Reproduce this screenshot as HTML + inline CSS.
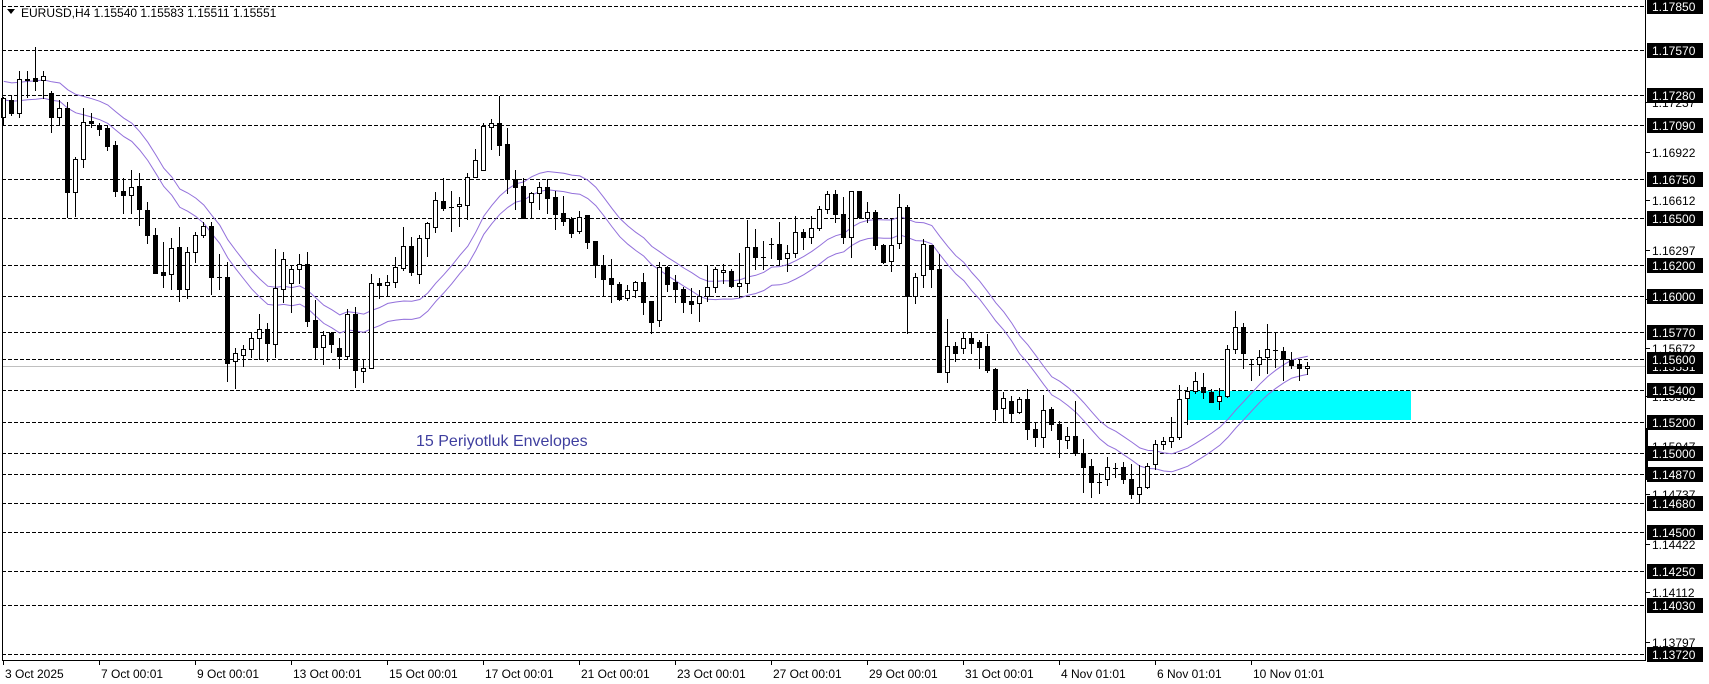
<!DOCTYPE html>
<html><head><meta charset="utf-8">
<style>
html,body{margin:0;padding:0;background:#fff;width:1709px;height:684px;overflow:hidden}
svg{display:block}
text{font-family:"Liberation Sans",Arial,sans-serif;font-size:12px}
</style></head>
<body>
<svg id="s" width="1709" height="684" viewBox="0 0 1709 684" xmlns="http://www.w3.org/2000/svg">
<rect width="1709" height="684" fill="#fff"/>
<g id="grid"></g>
<rect x="1188" y="391" width="223" height="29" fill="#00ffff"/>
<line x1="2" y1="366.5" x2="1645" y2="366.5" stroke="#c0c0c0" stroke-width="1"/>
<g id="env"></g>
<g id="candles"></g>
<text x="416" y="446" fill="#3f3f9f" style="font-size:16px">15 Periyotluk Envelopes</text>
<polygon points="7,9 15,9 11,14" fill="#000"/>
<text x="21" y="17" fill="#000">EURUSD,H4  1.15540 1.15583 1.15511 1.15551</text>
<line x1="2.5" y1="0" x2="2.5" y2="661" stroke="#000"/>
<line x1="1645.5" y1="0" x2="1645.5" y2="661" stroke="#000"/>
<line x1="2" y1="660.5" x2="1646" y2="660.5" stroke="#000"/>
<rect x="1645" y="428" width="3" height="52" fill="#000"/>
<g id="axis"></g>
<g id="time"></g>
</svg>
<script>
var NS="http://www.w3.org/2000/svg";
function el(p,t,a,txt){var e=document.createElementNS(NS,t);for(var k in a)e.setAttribute(k,a[k]);if(txt!==undefined)e.textContent=txt;p.appendChild(e);return e;}
function Y(p){return 6+(1.1785-p)*15690;}
var grid=document.getElementById('grid'),axis=document.getElementById('axis');
var boxes=[1.1785,1.1757,1.1728,1.1709,1.1675,1.165,1.162,1.16,1.1577,1.156,1.154,1.152,1.15,1.1487,1.1468,1.145,1.1425,1.1403,1.1372];
boxes.forEach(function(p){var y=Math.round(Y(p))+0.5;el(grid,'line',{x1:2,y1:y,x2:1645,y2:y,stroke:'#000','stroke-dasharray':'4,2','stroke-width':1});});
var ticks=["1.17237","1.16922","1.16612","1.16297","1.15982","1.15672","1.15362","1.15047","1.14737","1.14422","1.14112","1.13797"];
ticks.forEach(function(t){var y=Math.round(Y(parseFloat(t)));el(axis,'line',{x1:1645,y1:y+0.5,x2:1650,y2:y+0.5,stroke:'#000'});el(axis,'text',{x:1652,y:y+5,fill:'#000'},t);});
// current price
(function(){var y=366;el(axis,'rect',{x:1647,y:y-7,width:56,height:15,fill:'#000'});el(axis,'text',{x:1652,y:y+5,fill:'#fff'},'1.15551');})();
boxes.forEach(function(p){var y=Math.round(Y(p));el(axis,'rect',{x:1647,y:y-7,width:56,height:15,fill:'#000'});el(axis,'text',{x:1652,y:y+5,fill:'#fff'},p.toFixed(5));});
// time axis
var tg=document.getElementById('time');
var tl=["3 Oct 2025","7 Oct 00:01","9 Oct 00:01","13 Oct 00:01","15 Oct 00:01","17 Oct 00:01","21 Oct 00:01","23 Oct 00:01","27 Oct 00:01","29 Oct 00:01","31 Oct 00:01","4 Nov 01:01","6 Nov 01:01","10 Nov 01:01"];
tl.forEach(function(t,i){var x=i==0?3:Math.round(3.3+96*i);el(tg,'line',{x1:x+0.5,y1:660,x2:x+0.5,y2:665,stroke:'#000'});el(tg,'text',{x:x+2,y:678,fill:'#000'},t);});
// candles
var Z6=[['w',295,352,290,375],['b',300,340,285,345],['w',238,340,213,352],['w',236,240,213,290],['b',235,244,142,270],['w',228,240,212,295],['b',280,352,272,395],['w',325,352,300,375],['b',325,575,305,650],['w',478,575,470,647],['w',367,478,325,500],['b',363,368,340,382],['b',375,386,370,404],['b',385,437,378,450],['b',435,572,422,587],['b',573,586,535,640],['w',560,586,510,638],['b',558,626,520,675],['b',630,706,605,728],['b',705,818,685,818],['b',817,824,726,860],['w',745,823,715,868],['b',742,868,682,902],['w',757,868,742,895],['w',705,757,697,785],['w',678,705,665,710],['b',678,832,665,882],['w',831,831,763,868],['b',831,1088,785,1142],['w',1060,1083,1045,1165],['w',1048,1066,1035,1097],['w',1015,1047,1000,1070],['w',988,1015,942,1077],['b',988,1030,968,1083],['w',865,1033,746,1072],['w',778,868,757,907],['w',808,848,796,937],['w',793,808,762,848],['b',793,962,755,978],['b',960,1040,900,1075],['w',1005,1042,992,1093],['b',1000,1033,997,1057],['b',1045,1067,1015,1105],['w',943,1067,928,1078],['b',943,1110,920,1162],['w',1105,1113,1080,1147],['w',850,1105,822,1105],['b',850,856,833,895],['w',845,856,825,888],['w',802,845,770,860],['w',737,805,680,810],['b',737,815,712,825]];
var Z7=[['w',505,612,495,640],['w',460,505,457,557],['w',390,472,366,485],['b',393,413,325,420],['w',410,410,363,482],['w',403,409,382,467],['w',320,404,310,448],['w',270,320,238,322],['w',168,300,160,300],['w',160,170,148,237],['b',160,224,78,254],['b',223,326,175,368],['b',326,350,300,418],['b',348,443,325,443],['w',370,395,365,443],['w',350,370,337,418],['b',350,383,326,430],['b',381,431,363,476],['b',428,452,378,465],['b',446,490,440,502],['w',440,482,422,488],['b',436,515,436,533],['b',514,586,512,622],['b',586,626,555,675],['b',625,643,567,695],['b',643,686,636,690],['w',661,685,645,690],['w',637,661,632,680],['b',637,695,610,733],['b',693,755,693,790],['w',592,751,577,767],['b',592,641,589,662],['b',637,658,615,695],['b',657,695,650,727],['b',693,703,654,728],['w',679,700,659,752],['w',652,679,585,692],['w',598,652,592,665],['w',600,607,582,640],['b',602,647,596,652],['w',640,649,549,680],['w',532,640,450,665],['b',532,560,478,598],['w',560,560,513,598],['w',522,522,505,565],['b',522,568,457,585],['w',550,565,525,602],['w',487,550,438,560],['b',487,502,478,537],['w',475,502,438,518],['w',418,473,407,480],['w',373,418,362,430],['b',373,433,360,455]];
var Z8=[['b',132,202,80,218],['w',62,202,62,262],['b',62,140,62,145],['w',125,145,97,155],['b',125,224,120,237],['b',226,275,222,280],['w',226,274,145,302],['w',112,220,72,235],['b',112,378,105,488],['w',320,378,310,398],['w',223,316,208,350],['b',226,298,226,352],['b',298,605,252,605],['w',527,607,448,635],['b',527,548,515,572],['w',505,535,488,550],['b',505,518,488,548],['b',517,532,510,594],['b',528,600,492,605],['b',598,718,593,750],['w',683,714,665,755],['b',693,730,678,755],['w',688,727,680,730],['b',688,778,658,808],['b',778,800,755,828],['w',720,800,676,830],['b',718,763,710,780],['b',763,808,753,862],['w',797,810,772,833],['b',797,850,693,855],['b',848,890,808,965],['b',888,935,868,982],['w',935,935,910,970],['w',892,927,860,945],['w',895,895,880,920],['b',892,928,875,940],['b',928,972,882,985],['w',950,972,885,998],['w',887,950,878,955],['w',823,882,810,898],['w',813,823,800,838],['w',800,813,742,830],['w',688,802,645,808],['w',663,685,652,762],['w',632,663,605,670],['b',652,667,608,685],['b',667,695,657,697],['w',677,693,655,718],['w',538,677,525,680],['w',472,538,423,548],['b',472,548,460,595]];
var Z9=[['w',192,192,178,240],['w',172,193,150,225],['w',148,172,72,218],['w',150,150,97,200],['b',152,178,142,240],['b',180,195,155,205],['b',193,205,180,240],['w',198,205,186,222]];
var bars=[];
function add(arr,off){arr.forEach(function(c){bars.push({t:c[0],bt:off+c[1]/3,bb:off+c[2]/3,wt:off+c[3]/3,wb:off+c[4]/3});});}
add(Z6,0);add(Z7,70);add(Z8,170);add(Z9,300);
var cg=document.getElementById('candles');
var closes=[];
bars.forEach(function(b,i){
 var cx=Math.round(3.3+8*i);
 var bt=Math.round(b.bt),bb=Math.round(b.bb),wt=Math.round(b.wt),wb=Math.round(b.wb);
 if(wt>bt)wt=bt; if(wb<bb)wb=bb;
 el(cg,'line',{x1:cx+0.5,y1:wt,x2:cx+0.5,y2:wb+1,stroke:'#000','stroke-width':1});
 if(b.t=='b'){el(cg,'rect',{x:cx-2,y:bt,width:5,height:Math.max(1,bb-bt+1),fill:'#000'});closes.push(b.bb);}
 else{ if(bb-bt<1){el(cg,'rect',{x:cx-2,y:bt,width:5,height:1,fill:'#000'});}
   else el(cg,'rect',{x:cx-1.5,y:bt+0.5,width:4,height:bb-bt,fill:'#fff',stroke:'#000','stroke-width':1});
   closes.push(b.bt);}
});
// envelopes
function P(y){return 1.1785-(y-6)/15690;}
var pr=[];for(var k=0;k<14;k++)pr.push(P(90));closes.forEach(function(c){pr.push(P(c));});
var up=[],lo=[];
for(var i=0;i<closes.length;i++){var s=0;for(var j=0;j<15;j++)s+=pr[i+j];var m=s/15;var x=3.3+8*i+0.5;
 up.push(x.toFixed(1)+','+Y(m*1.0005).toFixed(1));lo.push(x.toFixed(1)+','+Y(m*0.9995).toFixed(1));}
var eg=document.getElementById('env');
el(eg,'polyline',{points:up.join(' '),fill:'none',stroke:'#9370db','stroke-width':1});
el(eg,'polyline',{points:lo.join(' '),fill:'none',stroke:'#9370db','stroke-width':1});
</script>
</body></html>
